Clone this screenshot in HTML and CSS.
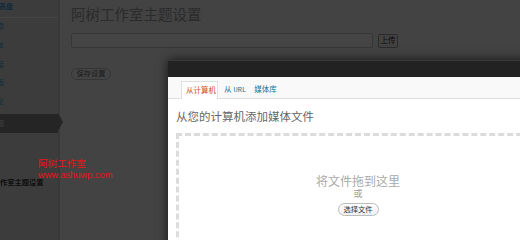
FILE: index.html
```html
<!DOCTYPE html>
<html lang="zh-CN">
<head>
<meta charset="utf-8">
<title>阿树工作室主题设置</title>
<link rel="stylesheet" href="styles.css">
</head>
<body>
<div class="page">
  <aside class="sidebar">
    <div class="menu-top">仪表盘</div>
    <div class="menu-item">文章</div>
    <div class="menu-item">媒体</div>
    <div class="menu-item">链接</div>
    <div class="menu-item">页面</div>
    <div class="menu-item">评论</div>
    <div class="menu-current">外观</div>
    <div class="submenu-current">阿树工作室主题设置</div>
  </aside>
  <main class="wrap">
    <h2 class="title">阿树工作室主题设置</h2>
    <div class="upload-row">
      <input class="text-input" type="text">
      <button class="btn btn-upload">上传</button>
    </div>
    <button class="btn btn-save">保存设置</button>
  </main>
</div>

<div class="backdrop"></div>

<div class="watermark">
  <div class="wm-name">阿树工作室</div>
  <div class="wm-url">www.ashuwp.com</div>
</div>

<div class="modal">
  <div class="modal-header"></div>
  <div class="tabs">
    <span class="tab tab-active">从计算机</span>
    <span class="tab">从 <span class="mono">URL</span></span>
    <span class="tab">媒体库</span>
  </div>
  <div class="modal-body">
    <h3 class="modal-heading">从您的计算机添加媒体文件</h3>
    <div class="dropzone">
      <div class="drop-info">将文件拖到这里</div>
      <div class="drop-or">或</div>
      <button class="btn btn-select">选择文件</button>
    </div>
  </div>
</div>
</body>
</html>
```

FILE: styles.css
```css
html, body {
  margin: 0;
  padding: 0;
  width: 520px;
  height: 240px;
  overflow: hidden;
  font-family: "Liberation Sans", "Noto Sans CJK SC", sans-serif;
}

.page {
  display: flex;
  height: 240px;
  background: #f0f0f0;
}

.sidebar {
  width: 58px;
  flex: none;
  background: #d8d8d8;
  border-right: 2px solid #cdcdcd;
  overflow: hidden;
  display: flex;
  flex-direction: column;
}

.menu-top {
  height: 15px;
  padding-top: 2px;
  margin-left: -8px;
  font-size: 7px;
  line-height: 10px;
  font-weight: bold;
  color: #3d9ccc;
  border-bottom: 1px solid #f4f4f4;
  white-space: nowrap;
}

.menu-item {
  height: 18.75px;
  line-height: 18.75px;
  margin-left: -10px;
  font-size: 7px;
  color: #3d9ccc;
  white-space: nowrap;
}

.menu-current {
  margin-top: 2px;
  height: 19px;
  line-height: 19px;
  margin-left: -10px;
  font-size: 7px;
  color: #e0e0e0;
  background: #868686;
  white-space: nowrap;
}

.submenu-current {
  margin-top: 46px;
  margin-left: -22px;
  font-size: 7.3px;
  line-height: 8px;
  font-weight: bold;
  color: #333;
  white-space: nowrap;
}

.wrap {
  flex: 1;
  padding-left: 11px;
  position: relative;
}

.wrap::before {
  content: "";
  position: absolute;
  left: -2px;
  top: 113px;
  border-top: 9.5px solid transparent;
  border-bottom: 9.5px solid transparent;
  border-left: 5px solid #868686;
}

.title {
  margin: 6px 0 0;
  font-size: 14.5px;
  line-height: 18px;
  font-weight: normal;
  color: #9a9a9a;
}

.upload-row {
  display: flex;
  align-items: center;
  gap: 5px;
  margin-top: 9px;
}

.text-input {
  box-sizing: border-box;
  width: 302px;
  height: 15px;
  margin: 0;
  padding: 0;
  border: 1px solid #c4c4c4;
  border-radius: 2px;
  background: #f8f8f8;
}

.btn {
  box-sizing: border-box;
  margin: 0;
  padding: 0;
  font-family: "Liberation Sans", "Noto Sans CJK SC", sans-serif;
  cursor: pointer;
}

.btn-upload {
  width: 20px;
  height: 14px;
  font-size: 7.5px;
  line-height: 12px;
  color: #222;
  background: #ececec;
  border: 1px solid #9a9a9a;
  border-radius: 2px;
}

.btn-save {
  display: block;
  margin-top: 20px;
  width: 40px;
  height: 12px;
  font-size: 7.3px;
  line-height: 10px;
  color: #666;
  background: #f4f4f4;
  border: 1px solid #bcbcbc;
  border-radius: 7px;
}

.backdrop {
  position: absolute;
  inset: 0;
  background: rgba(0, 0, 0, 0.72);
}

.watermark {
  position: absolute;
  left: 38px;
  top: 158px;
  color: #e8141a;
}

.wm-name {
  font-size: 9.6px;
  line-height: 12px;
}

.wm-url {
  font-family: "Liberation Sans", sans-serif;
  font-size: 9.3px;
  line-height: 11px;
}

.modal {
  position: absolute;
  left: 168px;
  top: 60px;
  width: 390px;
  height: 200px;
  background: #ffffff;
  box-shadow: 0 0 10px rgba(0, 0, 0, 0.7);
}

.modal-header {
  height: 16px;
  background: #222;
  border-top: 1px solid #3a3a3a;
}

.tabs {
  display: flex;
  align-items: flex-end;
  gap: 4px;
  height: 21px;
  padding-left: 13px;
  background: #f9f9f9;
  border-bottom: 1px solid #dfdfdf;
}

.tab {
  box-sizing: border-box;
  height: 17px;
  padding: 0 2px;
  font-size: 7.5px;
  line-height: 17px;
  color: #21759b;
  white-space: nowrap;
}

.tab-active {
  width: 37px;
  padding: 0 4px;
  margin-bottom: -1px;
  height: 18px;
  color: #d54e21;
  background: #ffffff;
  border: 1px solid #dfdfdf;
  border-bottom: none;
}

.mono {
  font-family: "Liberation Mono", monospace;
  font-size: 7px;
}

.modal-body {
  padding: 0 8px;
}

.modal-heading {
  margin: 11px 0 0;
  font-size: 11.5px;
  line-height: 14px;
  font-weight: normal;
  color: #666;
}

.dropzone {
  margin-top: 9px;
  width: 364px;
  height: 140px;
  box-sizing: border-box;
  border: 3px dashed #dcdcdc;
  padding-top: 39px;
  display: flex;
  flex-direction: column;
  align-items: center;
}

.drop-info {
  font-size: 12px;
  line-height: 14px;
  color: #aaa;
}

.drop-or {
  font-size: 9px;
  line-height: 11px;
  color: #999;
}

.btn-select {
  margin-top: 3px;
  width: 41px;
  height: 13px;
  font-size: 7.3px;
  line-height: 11px;
  color: #333;
  background: linear-gradient(#fefefe, #f0f0f0);
  border: 1px solid #bbb;
  border-radius: 7px;
}
```
